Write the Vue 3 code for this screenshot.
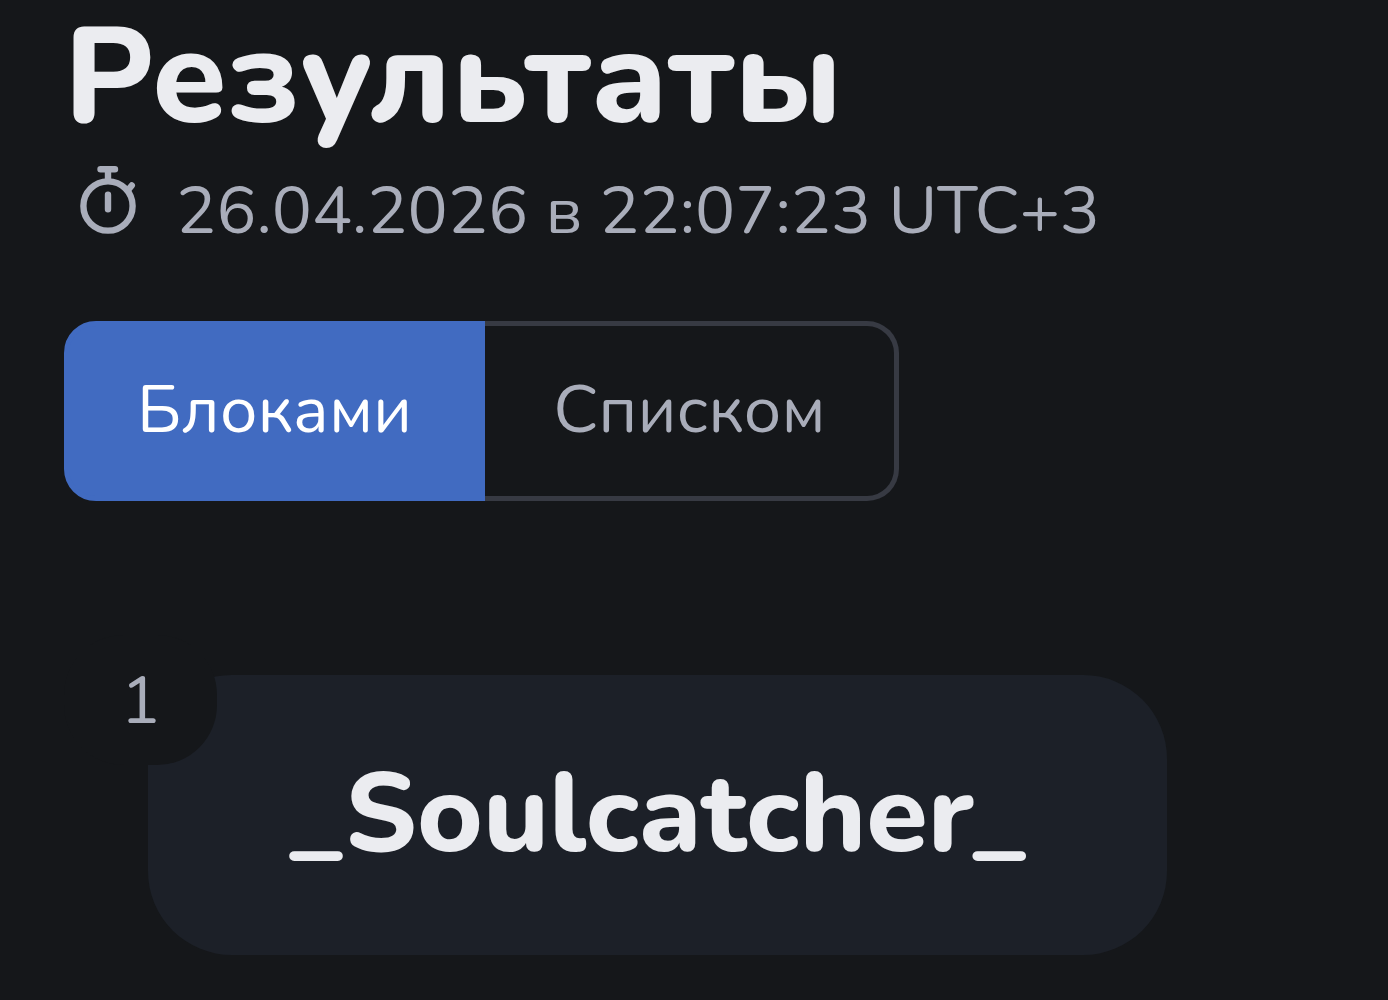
<script setup>
import { ref } from "vue";

const view = ref("blocks");
const views = [
	{ id: "blocks", label: "Блоками" },
	{ id: "list", label: "Списком" },
];
const winners = ref([{ place: 1, name: "_Soulcatcher_" }]);
</script>
<template>
	<main class="results">
		<h1 class="title">Результаты</h1>
		<div class="date">
			<svg class="date__icon" viewBox="0 0 56 68" aria-hidden="true">
				<path d="M20.5 3.3H35M28 3.3V14M48.5 23.5L51.8 19.5M28 28.8V43.2" />
				<circle cx="28" cy="40" r="24.6" />
			</svg>
			<time datetime="2026-04-26T22:07:23+03:00">26.04.2026 в 22:07:23 UTC+3</time>
		</div>

		<div class="switcher">
			<button v-for="item in views" :key="item.id" type="button" class="switcher__btn"
				:class="{ 'active': view == item.id }" @click="view = item.id">{{ item.label }}</button>
		</div>

		<ul class="winners" :class="view">
			<li v-for="winner in winners" :key="winner.place" class="winner">
				<span class="winner__place">{{ winner.place }}</span>
				<strong class="winner__name">{{ winner.name }}</strong>
			</li>
		</ul>
	</main>
</template>
<style>
body {
	margin: 0;
	background: #15171a;
}
</style>
<style scoped>
.results {
	padding: 0 64px 44px;
	font-family: Nunito, "Open Sans", "Noto Sans", sans-serif;
	font-size: 67px;
	color: #a9adba;
}

.title {
	margin: 0;
	font-size: 135px;
	font-weight: 800;
	line-height: 156px;
	color: #ebecf0;
}

.date {
	display: flex;
	align-items: flex-start;
	gap: 40px;
	padding: 10px 0 0 16px;
	line-height: 90px;
}

.date__icon {
	width: 56px;
	height: 68px;
	overflow: visible;
	fill: none;
	stroke: currentColor;
	stroke-width: 6.4;
	stroke-linecap: round;
}

.switcher {
	display: flex;
	width: fit-content;
	margin-top: 65px;
}

.switcher__btn {
	height: 180px;
	padding: 0 68px 2px;
	border: 5px solid #373a43;
	border-radius: 32px 0 0 32px;
	background: none;
	color: inherit;
	font: inherit;
	cursor: pointer;
}

.switcher__btn:last-child {
	border-left: 0;
	border-radius: 0 32px 32px 0;
}

.switcher__btn.active {
	border-color: #416bc1;
	background: #416bc1;
	color: #fff;
}

.winners {
	display: flex;
	flex-wrap: wrap;
	margin: 174px 0 0;
	padding: 0 84px;
	list-style: none;
}

.winner {
	position: relative;
	padding: 60px 140px;
	border-radius: 84px;
	background: #1c2028;
}

.winner__place {
	position: absolute;
	top: -40px;
	left: -84px;
	width: 153px;
	padding-top: 2px;
	line-height: 128px;
	border-radius: 60px;
	background: #15171a;
	text-align: center;
}

.winner__name {
	display: block;
	font-size: 112px;
	font-weight: 800;
	line-height: 160px;
	color: #ebecf0;
}
</style>
